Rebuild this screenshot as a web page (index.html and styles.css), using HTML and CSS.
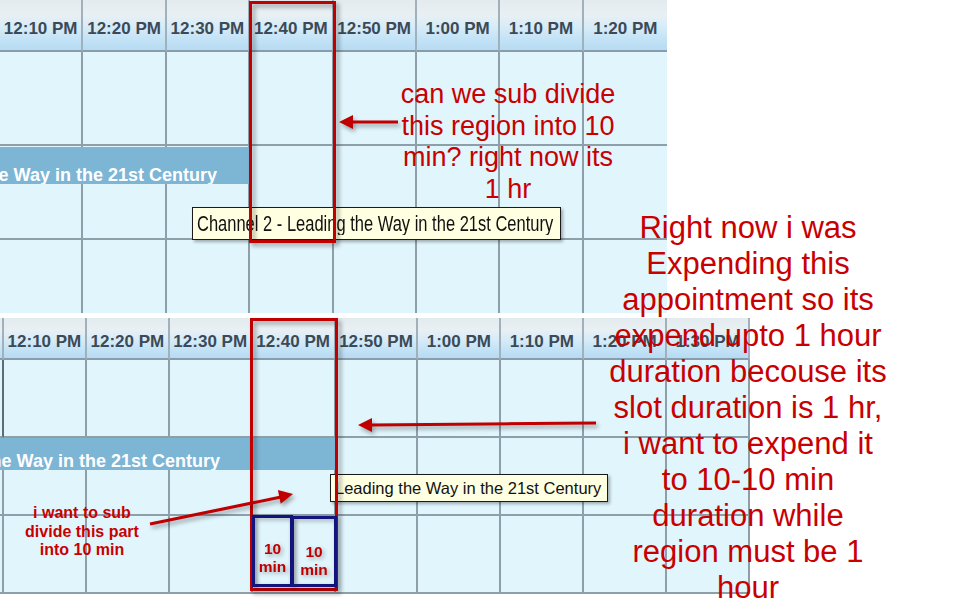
FILE: index.html
```html
<!DOCTYPE html>
<html lang="en">
<head>
    <meta charset="UTF-8">
    <title>Scheduler slot question</title>
    <link rel="stylesheet" href="styles.css">
</head>
<body>
    <div class="canvas">
        <div class="shot shot-top">
            <div class="grid grid-top">
                <div class="head">12:10 PM</div><div class="head">12:20 PM</div><div class="head">12:30 PM</div><div class="head">12:40 PM</div>
                <div class="head">12:50 PM</div><div class="head">1:00 PM</div><div class="head">1:10 PM</div><div class="head">1:20 PM</div>
                <div class="cell"></div><div class="cell"></div><div class="cell"></div><div class="cell"></div>
                <div class="cell"></div><div class="cell"></div><div class="cell"></div><div class="cell"></div>
                <div class="cell"></div><div class="cell"></div><div class="cell"></div><div class="cell"></div>
                <div class="cell"></div><div class="cell"></div><div class="cell"></div><div class="cell"></div>
                <div class="cell"></div><div class="cell"></div><div class="cell"></div><div class="cell"></div>
                <div class="cell"></div><div class="cell"></div><div class="cell"></div><div class="cell"></div>
            </div>
            <div class="event event-top"><span>Leading the Way in the 21st Century</span></div>
            <div class="tip tip-top"><span>Channel 2 - Leading the Way in the 21st Century</span></div>
        </div>

        <div class="shot shot-bottom">
            <div class="grid grid-bottom">
                <div class="head"></div>
                <div class="head">12:10 PM</div><div class="head">12:20 PM</div><div class="head">12:30 PM</div><div class="head">12:40 PM</div>
                <div class="head">12:50 PM</div><div class="head">1:00 PM</div><div class="head">1:10 PM</div><div class="head">1:20 PM</div><div class="head">1:30 PM</div>
                <div class="cell edge"></div>
                <div class="cell"></div><div class="cell"></div><div class="cell"></div><div class="cell"></div><div class="cell"></div>
                <div class="cell"></div><div class="cell"></div><div class="cell"></div><div class="cell"></div>
                <div class="cell"></div>
                <div class="cell"></div><div class="cell"></div><div class="cell"></div><div class="cell"></div><div class="cell"></div>
                <div class="cell"></div><div class="cell"></div><div class="cell"></div><div class="cell"></div>
                <div class="cell"></div>
                <div class="cell"></div><div class="cell"></div><div class="cell"></div><div class="cell"></div><div class="cell"></div>
                <div class="cell"></div><div class="cell"></div><div class="cell"></div><div class="cell"></div>
            </div>
            <div class="event event-bottom"><span>Leading the Way in the 21st Century</span></div>
            <div class="tip tip-bottom"><span>Leading the Way in the 21st Century</span></div>
        </div>

        <!-- annotations -->
        <div class="mark mark-top"></div>
        <div class="mark mark-bottom"></div>
        <div class="slot slot-a">10<br>min</div>
        <div class="slot slot-b">10<br>min</div>

        <svg class="arrows" width="962" height="609" viewBox="0 0 962 609">
            <g fill="#c00000" stroke="#c00000" stroke-width="3">
                <line x1="352" y1="122" x2="398" y2="122"/>
                <polygon stroke="none" points="339,122 353,115 353,129"/>
                <line x1="371" y1="425" x2="596" y2="423"/>
                <polygon stroke="none" points="358,425 372,418 372,432"/>
                <line x1="150" y1="524" x2="281" y2="497"/>
                <polygon stroke="none" points="293,494 280.7,503.7 277.9,490"/>
            </g>
        </svg>

        <p class="note note-top">can we sub divide<br>this region into 10<br>min? right now its<br>1 hr</p>
        <p class="note note-side">Right now i was<br>Expending this<br>appointment so its<br>expend upto 1 hour<br>duration becouse its<br>slot duration is 1 hr,<br>i want to expend it<br>to 10-10 min<br>duration while<br>region must be 1<br>hour</p>
        <p class="note note-small">i want to sub<br>divide this part<br>into 10 min</p>
    </div>
</body>
</html>
```

FILE: styles.css
```css
body {
    margin: 0;
    background-color: #ffffff;
    font-family: "Liberation Sans", Arial, sans-serif;
}

.canvas {
    position: relative;
    width: 962px;
    height: 609px;
    overflow: hidden;
}

/* scheduler screenshots */
.shot {
    position: relative;
}

.shot-top {
    width: 667px;
    height: 313px;
}

.shot-bottom {
    width: 750px;
    height: 276px;
    margin-top: 5px;
}

.grid {
    display: grid;
    height: 100%;
}

.grid-top {
    grid-template-columns: repeat(8, 1fr);
    grid-template-rows: 52px 94px 94px 73px;
}

.grid-bottom {
    grid-template-columns: 4px repeat(9, 1fr);
    grid-template-rows: 42px 78px 78px 78px;
}

.head {
    display: flex;
    align-items: center;
    justify-content: center;
    padding-top: 8px;
    background: linear-gradient(to bottom, #e3ebef 0%, #e8f0f4 30%, #d6ebf8 55%, #c2e2f6 80%, #b6dbf3 100%);
    border-right: 2px solid #a1b1bb;
    border-bottom: 2px solid #8a9ca9;
    color: #3b4a56;
    font-size: 17px;
    font-weight: bold;
    white-space: nowrap;
    overflow: hidden;
}

.cell {
    background-color: #e1f5fc;
    border-right: 2px solid #8f9faa;
    border-bottom: 2px solid #8f9faa;
}

.grid-top .cell:nth-last-child(-n+8) {
    border-bottom: 0;
}

.grid-top .head:nth-child(8),
.grid-top .cell:nth-child(8n) {
    border-right: 0;
}

.cell.edge {
    border-right-color: #5d6d78;
}

.event {
    position: absolute;
    left: 0;
    display: flex;
    justify-content: flex-end;
    align-items: flex-end;
    box-sizing: border-box;
    overflow: hidden;
    background-color: #7db5d5;
    color: #ffffff;
    font-size: 18px;
    font-weight: bold;
    line-height: 18px;
    white-space: nowrap;
}

.event span {
    flex-shrink: 0;
}

.event-top {
    top: 147px;
    width: 250px;
    height: 37px;
    padding-right: 33px;
}

.event-bottom {
    top: 120px;
    width: 337px;
    height: 32px;
    padding-right: 117px;
}

.tip {
    position: absolute;
    display: flex;
    align-items: center;
    box-sizing: border-box;
    padding-left: 4px;
    background-color: #ffffe1;
    border: 1px solid #1a1a1a;
    box-shadow: 2px 2px 3px rgba(0, 0, 0, 0.3);
    color: #111111;
    font-size: 16.5px;
    white-space: nowrap;
}

.tip-top {
    left: 192px;
    top: 207px;
    width: 369px;
    height: 33px;
}

.tip-top span {
    display: inline-block;
    transform: scaleY(1.3);
}

.tip-bottom {
    left: 330px;
    top: 156px;
    width: 278px;
    height: 28px;
}

/* annotations */
.mark {
    position: absolute;
    box-sizing: border-box;
    border: 3px solid #c00000;
    filter: drop-shadow(3px 3px 2px rgba(0, 0, 0, 0.35));
}

.mark-top {
    left: 249px;
    top: 1px;
    width: 87px;
    height: 242px;
}

.mark-bottom {
    left: 250px;
    top: 318px;
    width: 88px;
    height: 273px;
}

.slot {
    position: absolute;
    box-sizing: border-box;
    border: 3px solid #14147d;
    color: #c00000;
    font-size: 15.5px;
    font-weight: bold;
    line-height: 18px;
    text-align: center;
    filter: drop-shadow(2px 2px 2px rgba(0, 0, 0, 0.3));
}

.slot-a {
    left: 252px;
    top: 515px;
    width: 41px;
    height: 72px;
    padding-top: 22px;
}

.slot-b {
    left: 291px;
    top: 516px;
    width: 46px;
    height: 71px;
    padding-top: 24px;
}

.arrows {
    position: absolute;
    left: 0;
    top: 0;
    filter: drop-shadow(2px 3px 2px rgba(0, 0, 0, 0.35));
}

.note {
    position: absolute;
    margin: 0;
    color: #c80000;
    text-align: center;
}

.note-top {
    left: 378px;
    top: 79px;
    width: 260px;
    font-size: 27px;
    line-height: 31.5px;
}

.note-side {
    left: 588px;
    top: 210px;
    width: 320px;
    font-size: 31px;
    line-height: 36px;
}

.note-small {
    left: 2px;
    top: 504px;
    width: 160px;
    font-size: 16px;
    font-weight: bold;
    line-height: 18.5px;
}
```
